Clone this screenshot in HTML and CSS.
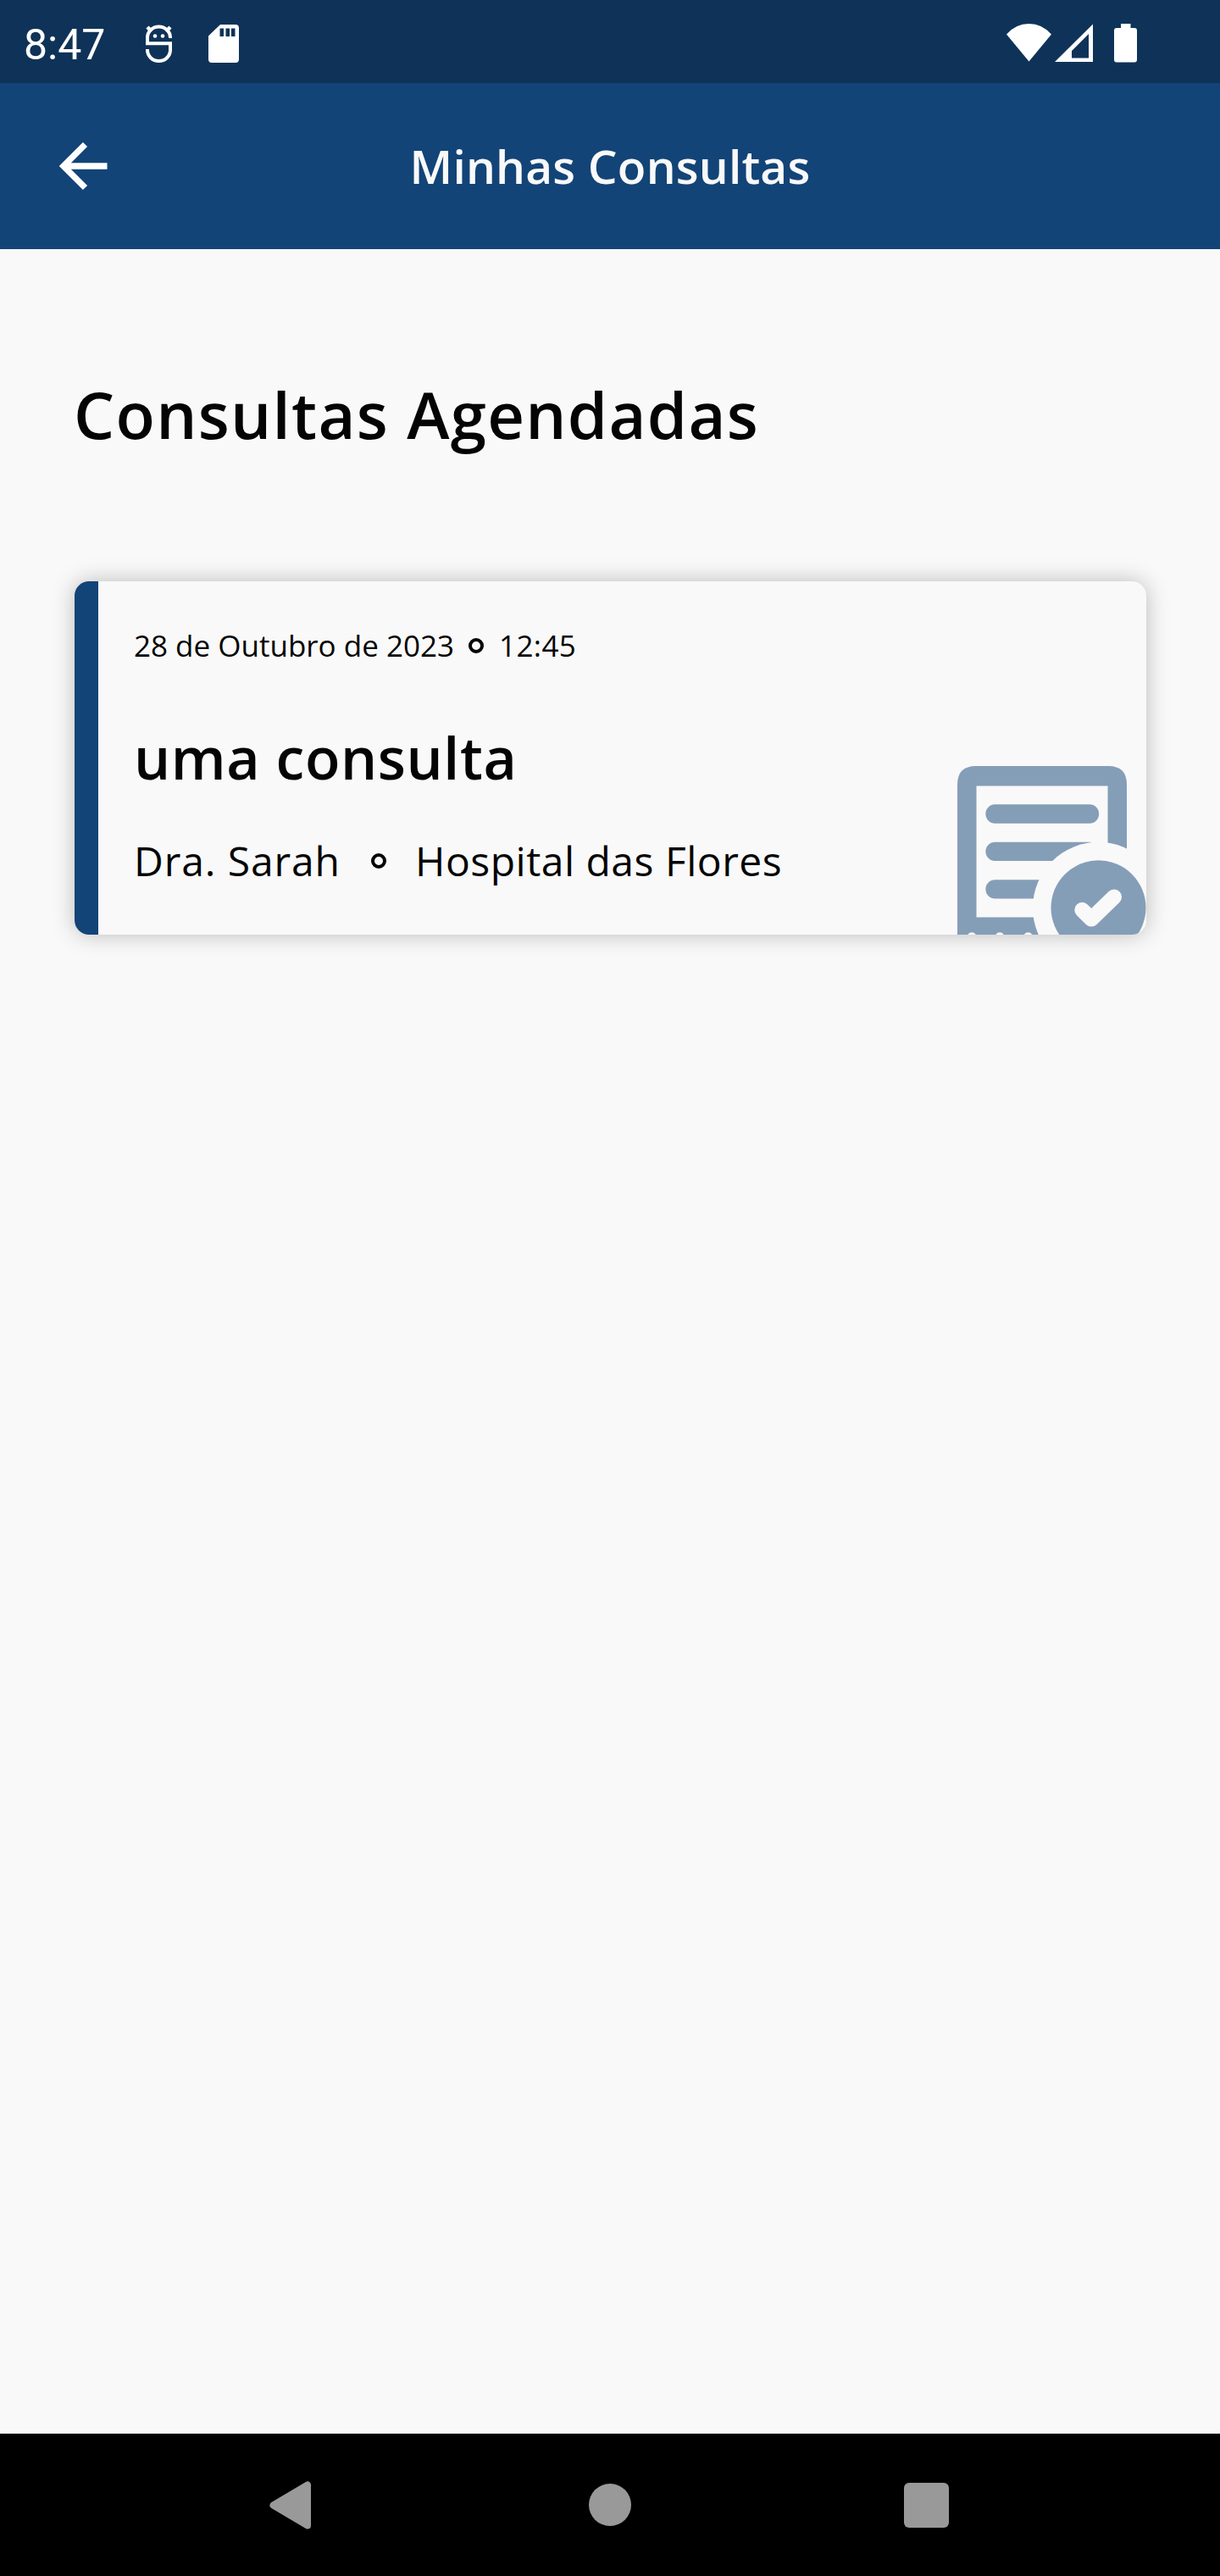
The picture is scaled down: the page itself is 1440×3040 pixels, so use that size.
FILE: index.html
```html
<!DOCTYPE html>
<html lang="pt-BR">
<head>
    <meta charset="UTF-8">
    <meta name="viewport" content="width=device-width, initial-scale=1.0">
    <title>Minhas Consultas</title>
    <link rel="stylesheet" href="styles.css">
</head>
<body>
    <div class="status-bar">
        <span class="clock">8:47</span>
        <svg class="icon-debug" width="32" height="46" viewBox="0 0 32 46" fill="none" stroke="#fff" stroke-width="4">
            <path d="M2 16V15.500a13.500 13 0 0 1 27 0V16M31 22.200H2M2 13V24.200M29 22V30a13.500 13 0 0 1-27 0V29"/>
            <path d="M2 3L7 8M29 3L24 8" stroke-width="4.500"/>
            <circle cx="11" cy="13.500" r="2.300" fill="#fff" stroke="none"/>
            <circle cx="20" cy="13.500" r="2.300" fill="#fff" stroke="none"/>
        </svg>
        <svg class="icon-sd" width="36" height="45" viewBox="0 0 36 45">
            <path fill="#fff" fill-rule="evenodd" d="M14 0H32Q36 0 36 4V41Q36 45 32 45H4Q0 45 0 41V13.500ZM13.500 4.500V14H18V4.500ZM20.500 4.500V14H25V4.500ZM27 4.500V14H31.500V4.500Z"/>
        </svg>
        <svg class="icon-signals" width="156" height="46" viewBox="0 0 156 46" fill="#fff">
            <path d="M0 12.500Q11 0 26.500 0T53 12.500L26.500 44.500Z"/>
            <path fill-rule="evenodd" d="M102 0.500V45H57ZM97 12L77 32V40.500H97Z"/>
            <path d="M135 0H146.500V5H151Q154 5 154 8V42.500Q154 45.500 151 45.500H130Q127 45.500 127 42.500V8Q127 5 130 5H135Z"/>
        </svg>
    </div>

    <header class="app-bar">
        <svg class="icon-back" width="57" height="57" viewBox="0 0 57 57" fill="none" stroke="#fff" stroke-width="7.300">
            <path d="M56.500 28H7M30.500 2.500L5 28L30.500 53.500"/>
        </svg>
        <h1>Minhas Consultas</h1>
    </header>

    <main>
        <h2>Consultas Agendadas</h2>

        <div class="card">
            <div class="date-row">
                <span class="date">28 de Outubro de 2023</span>
                <span class="dot dot-bold"></span>
                <span class="time">12:45</span>
            </div>
            <h3>uma consulta</h3>
            <div class="place-row">
                <span class="doctor">Dra. Sarah</span>
                <span class="dot"></span>
                <span class="hospital">Hospital das Flores</span>
            </div>
            <svg class="card-icon" width="233" height="213" viewBox="0 0 233 213">
                <path fill="#859eb8" fill-rule="evenodd" d="M10 213V36Q10 14 32 14H188Q210 14 210 36V213ZM32.500 37.500V192.500H187.500V37.500Z"/>
                <path fill="none" stroke="#859eb8" stroke-width="22.300" stroke-linecap="round" d="M54.500 70.500H166M54.500 114.800H166M54.500 159.300H166"/>
                <circle cx="176.500" cy="181.300" r="77.500" fill="#f9f9f9"/>
                <circle cx="176.500" cy="181.300" r="56" fill="#859eb8"/>
                <path fill="none" stroke="#f9f9f9" stroke-width="18" stroke-linecap="round" stroke-linejoin="round" d="M157.300 183.800L168.200 194.500L195 168.500"/>
                <path fill="#f9f9f9" d="M22 213l3-2.500h4l3 2.500zM55 213l3-2.500h4l3 2.500zM88.500 213l3-2.500h4l3 2.500z"/>
            </svg>
        </div>
    </main>

    <nav class="nav-bar">
        <svg width="50" height="57" viewBox="0 0 50 57">
            <path fill="#999" stroke="#999" stroke-width="8" stroke-linejoin="round" d="M45 4.500V52.500L4.500 28.500Z"/>
        </svg>
        <div class="nav-home"></div>
        <div class="nav-recent"></div>
    </nav>
</body>
</html>
```
FILE: styles.css
```css
* {
    box-sizing: border-box;
}
body {
    font-family: "Open Sans", sans-serif;
    margin: 0;
    height: 3040px;
    display: flex;
    flex-direction: column;
    background: #f9f9f9;
    color: #040404;
}
h1, h2, h3 {
    margin: 0;
    font-weight: 600;
    white-space: nowrap;
}
.status-bar {
    height: 98px;
    padding: 28px 96px 0 28px;
    display: flex;
    align-items: flex-start;
    background: #0f3358;
    color: #fff;
}
.clock {
    width: 144px;
    font-family: Roboto, sans-serif;
    font-size: 50px;
    line-height: 50px;
}
.icon-debug {
    margin-top: 1px;
}
.icon-sd {
    margin: 1px 0 0 42px;
}
.icon-signals {
    margin-left: auto;
}
.app-bar {
    height: 196px;
    padding: 0 70px;
    display: grid;
    grid-template-columns: 57px 1fr 57px;
    align-items: center;
    background: #124477;
    color: #f9f9f9;
}
.app-bar h1 {
    justify-self: center;
    font-size: 55px;
    line-height: 70px;
    letter-spacing: 0.2px;
}
main {
    flex: 1;
    padding: 146px 87px 0 88px;
}
h2 {
    margin-left: -1px;
    font-size: 76px;
    line-height: 98px;
    letter-spacing: 1.3px;
}
.card {
    position: relative;
    height: 417px;
    margin-top: 148px;
    padding: 51px 45px 0;
    padding-left: 42px;
    border-left: 28px solid #124477;
    border-radius: 17px;
    box-shadow: 0 0 27px rgba(0, 0, 0, 0.25);
    overflow: hidden;
}
.date-row, .place-row {
    display: flex;
    align-items: center;
    white-space: nowrap;
}
.date-row {
    font-size: 35px;
    line-height: 50px;
}
.date {
    width: 395px;
}
.time {
    margin-left: 18px;
    letter-spacing: 0.4px;
}
h3 {
    margin-top: 62px;
    font-size: 68px;
    line-height: 90px;
    letter-spacing: 0.6px;
}
.place-row {
    margin-top: 47px;
    font-size: 48px;
    line-height: 60px;
}
.doctor {
    width: 280px;
    letter-spacing: 0.9px;
}
.hospital {
    margin-left: 34px;
    letter-spacing: 0.5px;
}
.dot {
    width: 18px;
    height: 18px;
    border: 4px solid #040404;
    border-radius: 50%;
}
.dot-bold {
    border-width: 4.5px;
}
.card-icon {
    position: absolute;
    right: 0;
    bottom: 0;
}
.nav-bar {
    height: 168px;
    padding: 0 320px 0 318px;
    display: grid;
    grid-template-columns: 1fr 50px 1fr;
    align-items: center;
    background: #000;
}
.nav-home {
    width: 50px;
    height: 50px;
    margin-left: 1px;
    border-radius: 50%;
    background: #999;
}
.nav-recent {
    width: 53px;
    height: 53px;
    justify-self: end;
    border-radius: 6px;
    background: #999;
}
```
